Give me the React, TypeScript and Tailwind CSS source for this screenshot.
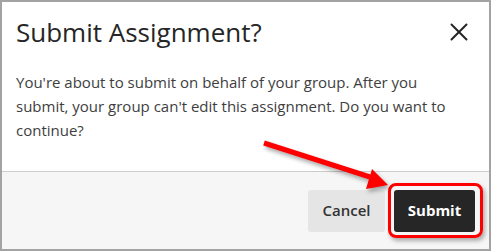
import { X } from "lucide-react";

export default function App() {
  return (
    <div className="relative w-[491px] h-[251px] bg-white border-2 border-[#a3a3a3] flex flex-col font-['Open_Sans',sans-serif] overflow-hidden">
      {/* Header */}
      <div className="h-[60px] flex items-center justify-between pl-[14px] pr-[15px]">
        <h1 className="text-[26px] leading-none text-[#262626]">Submit Assignment?</h1>
        <X className="w-[30px] h-[30px] text-[#262626]" strokeWidth={1.6} />
      </div>

      {/* Body */}
      <div className="px-[14px] pt-[8px] pr-[20px] h-[109px]">
        <p className="text-[15px] leading-[24px] text-[#3e3e3e]">
          You're about to submit on behalf of your group. After you submit, your group can't edit this assignment. Do you want to continue?
        </p>
      </div>

      {/* Footer */}
      <div className="flex-1 bg-[#f6f6f6] border-t border-[#cdcdcd] flex items-center justify-end gap-[9px] pr-[14px]">
        <button className="h-[42px] w-[77px] rounded-[3px] bg-[#e5e5e5] text-[15px] font-semibold text-[#333]">Cancel</button>
        <div className="relative">
          <div className="absolute -left-[6px] -right-[8px] -top-[7px] -bottom-[6px] border-[3px] border-[#f00] rounded-[8px] shadow-[2px_3px_4px_rgba(0,0,0,0.3)]"></div>
          <button className="relative h-[42px] w-[81px] rounded-[3px] bg-[#262626] text-[15px] font-bold text-white">Submit</button>
        </div>
      </div>

      {/* Red arrow annotation */}
      <svg className="absolute left-0 top-0 pointer-events-none drop-shadow-[2px_3px_2px_rgba(0,0,0,0.35)]" width="491" height="251" viewBox="0 0 491 251">
        <line x1="262" y1="141" x2="368" y2="175" stroke="#f00" strokeWidth="5" />
        <polygon points="386,183 364,187 370,167" fill="#f00" />
      </svg>
    </div>
  );
}
